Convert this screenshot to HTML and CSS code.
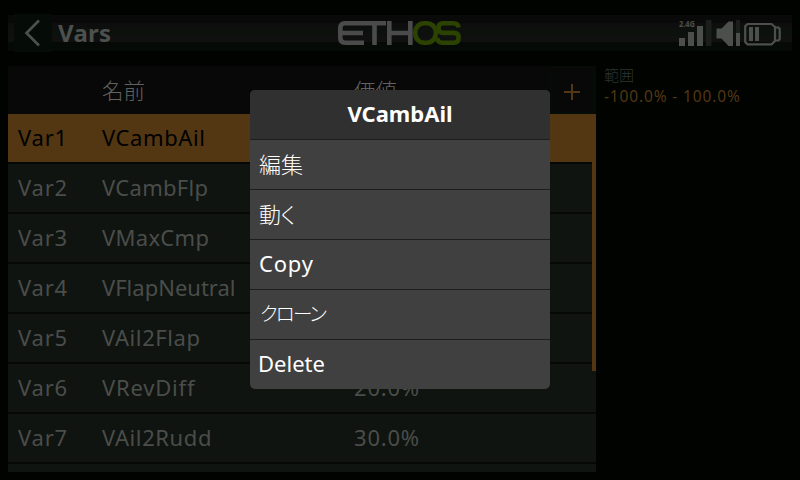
FILE: index.html
```html
<!DOCTYPE html>
<html lang="ja">
<head>
<meta charset="utf-8">
<title>Vars</title>
<link rel="stylesheet" href="styles.css">
</head>
<body>
<div class="screen">
  <header class="topbar">
    <div class="back"><svg width="38" height="38" viewBox="0 0 38 38"><path d="M25 6.5 12.500 19 25 31.500" fill="none" stroke="#4d504d" stroke-width="2.700"/></svg></div>
    <h1>Vars</h1>
    <svg class="logo" width="124" height="26" viewBox="0 0 124 26" fill="none" stroke-width="4.6">
      <path stroke="#4b4b4b" d="M26 3.3H7Q2.3 3.3 2.3 8V18Q2.3 22.7 7 22.7H26M3 13H25M24 3.3H48M36.5 3V25M51.3 1V25M72.3 1V25M51 13H72"/>
      <rect x="77.3" y="3.3" width="20.5" height="19.4" rx="9" stroke="#2b4200"/>
      <path stroke="#2b4200" d="M120.5 7.5Q120 3.3 115.5 3.3H105Q100.5 3.3 100.5 8T105 12.9H116Q120.6 12.9 120.6 17.8T116 22.7H104Q99.8 22.7 99.2 18"/>
    </svg>
    <svg class="status" width="106" height="32" viewBox="0 0 106 32">
      <text x="1" y="9.5" class="band" textLength="16" lengthAdjust="spacingAndGlyphs">2.4G</text>
      <g fill="#4b504d"><path d="M1 21h6v8H1zM10 15h6v14h-6zM19 9h6v20h-6zM38.500 11.500h5L50.500 4.500h4.500v24.500H50.500l-7-7.500h-5z"/><path d="M58 16h4v13h-4zM71 10h4v14h-4zM77 10h4v14h-4z"/></g>
      <path fill="#1b1f1c" d="M28 3h5.500v26h-5.500zM58 3h4v13h-4z"/>
      <g fill="none" stroke="#4b504d" stroke-width="2.200"><path d="M69.500 7H93.500L97 10V24L93.500 27.300H69.500L67.200 25V9.300Z"/><path d="M97.500 10.500H100.500L101.700 12V22L100.500 23.500H97.500"/></g>
    </svg>
  </header>
  <main class="content">
    <section class="table">
      <div class="thead"><span class="cell id"></span><span class="cell name jp">名前</span><span class="cell value jp">価値</span><span class="add"><svg width="16" height="16" viewBox="0 0 16 16"><path d="M0 8H16M8 0V16" stroke="#533713" stroke-width="2"/></svg></span></div>
      <div class="row selected"><span class="cell id">Var1</span><span class="cell name snug">VCambAil</span></div>
      <div class="row"><span class="cell id">Var2</span><span class="cell name tight">VCambFlp</span></div>
      <div class="row"><span class="cell id">Var3</span><span class="cell name tight">VMaxCmp</span></div>
      <div class="row"><span class="cell id">Var4</span><span class="cell name tightest">VFlapNeutral</span></div>
      <div class="row"><span class="cell id">Var5</span><span class="cell name snug">VAil2Flap</span></div>
      <div class="row"><span class="cell id">Var6</span><span class="cell name">VRevDiff</span><span class="cell value">20.0%</span></div>
      <div class="row"><span class="cell id">Var7</span><span class="cell name snug">VAil2Rudd</span><span class="cell value">30.0%</span></div>
      <div class="row"></div>
      <div class="scrollbar"></div>
    </section>
    <aside class="info">
      <div class="label">範囲</div>
      <div class="range">-100.0% - 100.0%</div>
    </aside>
  </main>
  <div class="menu">
    <h2>VCambAil</h2>
    <div class="item jp">編集</div>
    <div class="item jp kana">動く</div>
    <div class="item">Copy</div>
    <div class="item jp clone">クローン</div>
    <div class="item delete">Delete</div>
  </div>
</div>
</body>
</html>
```
FILE: styles.css
```css
* { box-sizing: border-box; }
body { margin: 0; background: #000300; font-family: "Noto Sans", "Noto Sans CJK JP", sans-serif; }
.screen { position: relative; width: 800px; height: 480px; padding: 14px 8px 8px; overflow: hidden; background: #000300; }
.topbar {
  display: grid; grid-template-columns: 38px 279px 124px 1fr 106px; align-items: start;
  height: 38px; padding: 0 8px 0 6px;
  background: linear-gradient(#000 1px, #090909 1px 9px, #0e0e0e 9px 14px, #0d110e 14px 22px, #101010 22px 28px, #060a07 28px 37px, #000 37px);
}
.back { width: 38px; height: 38px; background: #050b07; }
.back svg { display: block; }
h1 { margin: 0; padding-left: 6px; font-size: 24px; line-height: 38px; font-weight: 700; color: #4d504d; letter-spacing: .3px; }
.logo { margin: 6px 0 0 7px; overflow: visible; }
.status { margin-top: 3px; grid-column: 5; }
.band { font: 700 8.500px "Noto Sans", sans-serif; fill: #4b504d; }
.content { display: flex; margin-top: 14px; }
.table { position: relative; width: 588px; height: 406px; overflow: hidden; background: #060806; }
.thead { display: flex; height: 48px; background: #080808; }
.row { display: flex; height: 48px; margin-bottom: 2px; background: #0f1410; }
.row.selected { background: #533713; }
.cell { font-size: 22px; line-height: 46px; color: #4a4d4a; letter-spacing: .8px; white-space: nowrap; }
.selected .cell { color: #000; }
.id { width: 94px; padding-left: 10px; }
.name { width: 252px; }
.snug { letter-spacing: .6px; }
.tight { letter-spacing: .3px; }
.tightest { letter-spacing: 0; }
.thead .value { width: 196px; }
.jp { font-family: "Noto Sans CJK JP", sans-serif; font-weight: 300; letter-spacing: 0; }
.thead .jp { font-size: 21.500px; line-height: 48px; color: #606360; }
.add { display: grid; place-items: center; width: 46px; padding-top: 4px; border: 2px solid #050b07; border-right-width: 4px; }
.scrollbar { position: absolute; right: 0; top: 48px; width: 4px; height: 257px; background: #533713; }
.info { padding-left: 8px; }
.label { height: 20px; font: 300 15px/17px "Noto Sans CJK JP", sans-serif; color: #2e322e; }
.range { font-size: 15.500px; line-height: 21px; letter-spacing: .85px; color: #533713; }
.menu { position: absolute; left: 250px; top: 90px; width: 300px; height: 299px; border-radius: 5px; overflow: hidden; background: #404040; color: #fff; }
h2 { margin: 0; height: 49px; background: #303030; font-size: 22px; line-height: 46px; font-weight: 700; text-align: center; letter-spacing: 0; }
.item { height: 50px; padding-left: 9px; border-top: 1px solid #1d1d1d; font-size: 22px; line-height: 47px; letter-spacing: .8px; }
.item.jp { letter-spacing: 0; }
.item.kana { font-feature-settings: "palt"; letter-spacing: -.500px; }
.item.clone { font-feature-settings: "palt"; font-size: 19.500px; letter-spacing: -1.700px; line-height: 46px; padding-left: 10px; }
.item.delete { letter-spacing: 0; padding-left: 8px; }
```
